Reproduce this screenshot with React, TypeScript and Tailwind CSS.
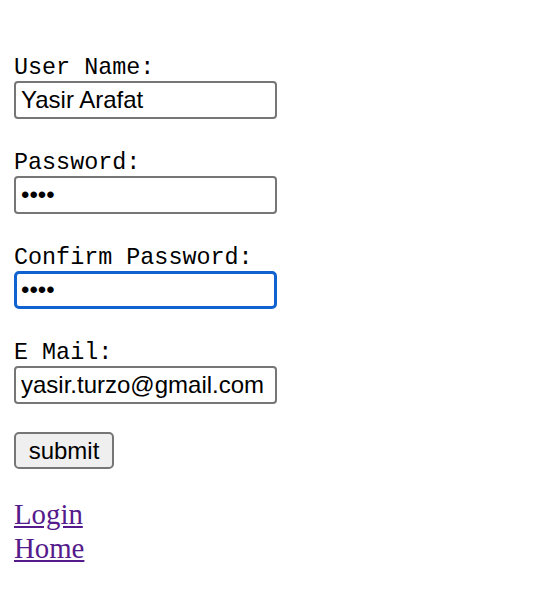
const fields = [
  { label: "User Name:", type: "text", value: "Yasir Arafat" },
  { label: "Password:", type: "password", value: "abcd" },
  { label: "Confirm Password:", type: "password", value: "abcd", focused: true },
  { label: "E Mail:", type: "text", value: "yasir.turzo@gmail.com" },
];

const App = () => {
  return (
    <div className="min-h-[608px] w-[544px] bg-white px-[14px] pt-[55px]">
      <form className="flex flex-col" onSubmit={(e) => e.preventDefault()}>
        {fields.map((f) => (
          <div key={f.label} className="mb-[31px] flex flex-col">
            <label className="h-[26px] font-['Liberation_Mono',monospace] text-[23.4px] leading-[26px] text-black">
              {f.label}
            </label>
            <input
              type={f.type}
              value={f.value}
              readOnly
              className={
                f.focused
                  ? "h-[38px] w-[263px] rounded-[5px] border-[3px] border-[#0f62cf] bg-white px-[4px] font-['Liberation_Sans',Arial,sans-serif] text-[24px] text-black outline-none"
                  : "h-[38px] w-[263px] rounded-[4px] border-2 border-[#767676] bg-white px-[5px] font-['Liberation_Sans',Arial,sans-serif] text-[24px] text-black outline-none"
              }
            />
          </div>
        ))}
        <div className="-mt-[3px]">
          <button
            type="submit"
            className="h-[37px] w-[100px] rounded-[5px] border-2 border-[#767676] bg-[#efefef] font-['Liberation_Sans',Arial,sans-serif] text-[24px] leading-none text-black"
          >
            submit
          </button>
        </div>
      </form>
      <div className="mt-[28px] flex flex-col items-start font-['Liberation_Serif','Times_New_Roman',serif] text-[28.8px] leading-[34px] text-[#551a8b]">
        <a href="#" className="underline">Login</a>
        <a href="#" className="underline">Home</a>
      </div>
    </div>
  );
};

export default App;
